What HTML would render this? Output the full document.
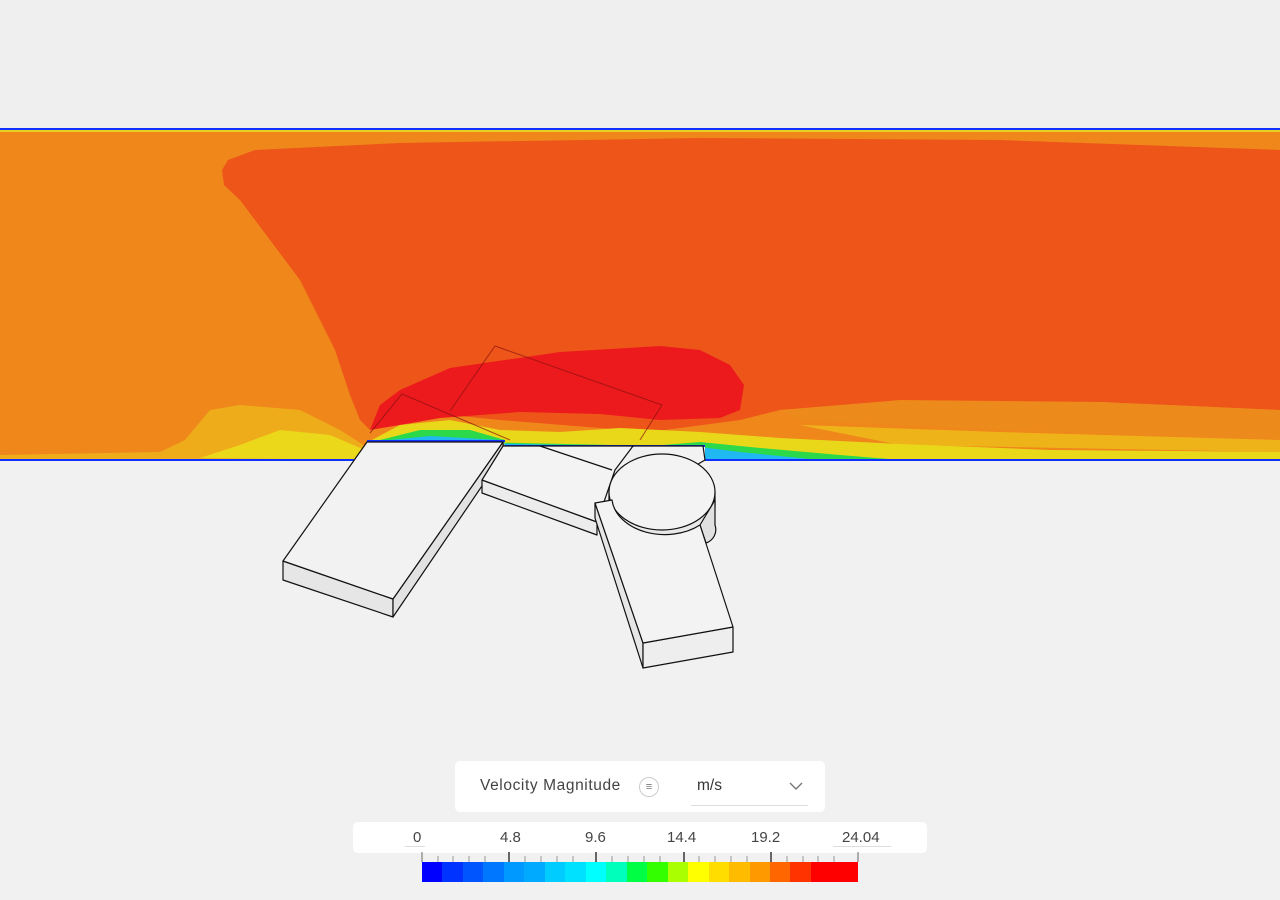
<!DOCTYPE html>
<html><head><style>
body{margin:0;width:1280px;height:900px;background:#f0f0f0;overflow:hidden;font-family:"Liberation Sans",sans-serif;position:relative}
svg{position:absolute;left:0;top:0}
.panel{position:absolute;background:#fff;border-radius:5px}
.bar{position:absolute;left:422px;top:862px;width:436px;height:20px;display:flex}
.bar div{flex:1}
</style></head><body>
<svg width="1280" height="900">
<rect x="0" y="0" width="1280" height="128" fill="#efefef"/>
<rect x="0" y="460" width="1280" height="440" fill="#f1f1f1"/>
<rect x="0" y="130" width="1280" height="330" fill="#ef871b"/>
<rect x="0" y="130" width="1280" height="2" fill="#e8d020"/>
<path d="M222,170 L228,160 L255,150 L400,143 L700,138 L1000,140 L1280,150 L1280,410 L1100,402 L900,400 L780,410 L740,420 L650,432 L500,420 L400,410 L370,430 L360,420 L350,395 L335,350 L300,280 L240,200 L224,185Z" fill="#ee5519"/>
<path d="M370,430 L380,405 L400,390 L450,368 L560,352 L660,346 L700,350 L730,365 L744,385 L740,410 L720,418 L660,420 L600,414 L520,412 L440,418 L400,425Z" fill="#ec1a1c"/>
<path d="M0,455 L160,452 L185,440 L210,410 L240,405 L300,410 L340,430 L368,448 L380,460 L0,460Z" fill="#eeac1a"/>
<path d="M200,458 L240,445 L280,430 L330,435 L365,450 L370,460Z" fill="#ecd81a"/>
<path d="M780,410 L900,401 L1100,402 L1280,410 L1280,440 L1000,430 L800,420Z" fill="#ed8a1c"/>
<path d="M800,425 L1000,432 L1280,440 L1280,452 L900,445Z" fill="#efb31a"/>
<path d="M368,442 L400,425 L450,420 L500,430 L560,432 L620,428 L700,432 L780,438 L900,444 L1050,450 L1280,452 L1280,460 L705,460 L703,446 L505,446 L503,442Z" fill="#e9d81a"/>
<path d="M380,440 L420,430 L470,430 L505,440 L505,446 L650,446 L700,442 L760,448 L840,455 L900,460 L705,460 L703,447Z" fill="#2cd94a"/>
<path d="M380,441 L430,436 L500,440 L506,447 L700,447 L740,452 L800,458 L820,460 L705,460 L703,448Z" fill="#1fb8f0"/>
<rect x="0" y="128" width="1280" height="2" fill="#1030ff"/>
<rect x="0" y="459" width="1280" height="2" fill="#1030ff"/>
<path d="M367,441 L503,441 L503,446 L705,446 L705,461 L367,461Z" fill="#f0f0f0"/>
<line x1="367" y1="441" x2="505" y2="441" stroke="#1030ff" stroke-width="2"/>
<line x1="505" y1="446" x2="705" y2="446" stroke="#1030ff" stroke-width="2"/>
<g fill="none" stroke="#8a1010" stroke-width="1" opacity="0.7">
<path d="M370,433 L402,394 L510,440"/>
<path d="M450,411 L495,346 L662,405 L640,440"/>
</g>
<g stroke="#111" stroke-width="1.2" stroke-linejoin="round">
<path d="M283,561 L393,599 L393,617 L283,580Z" fill="#e6e6e6"/>
<path d="M503,442 L393,599 L393,617 L503,455Z" fill="#e2e2e2"/>
<path d="M367,442 L503,442 L393,599 L283,561Z" fill="#f2f2f2"/>
<path d="M482,480 L597,522 L597,535 L482,493Z" fill="#ececec"/>
<path d="M482,480 L503,446 L633,446 L615,470 L597,522Z" fill="#f3f3f3"/>
<path d="M540,446 L612,470" fill="none"/>
<path d="M632,446 L703,446 L705,460 L688,470" fill="#f2f2f2"/>
<path d="M609,492 L609,505 A53,38 0 0 0 715,505 L715,492Z" fill="#e8e8e8"/>
<path d="M715,500 L715,525 A14,14 0 0 1 706,543 L700,525Z" fill="#e0e0e0"/>
<ellipse cx="662" cy="492" rx="53" ry="38" fill="#f3f3f3"/>
<path d="M595,503 L643,643 L643,668 L595,518Z" fill="#e6e6e6"/>
<path d="M643,643 L733,627 L733,652 L643,668Z" fill="#eeeeee"/>
<path d="M595,503 L612,500 A53,38 0 0 0 700,525 L733,627 L643,643Z" fill="#f3f3f3"/>
</g>
</svg>
<div class="panel" style="left:455px;top:761px;width:370px;height:51px">
<span style="position:absolute;left:25px;top:16px;font-size:15.5px;letter-spacing:0.6px;color:#444">Velocity Magnitude</span>
<span style="position:absolute;left:184px;top:16px;width:18px;height:18px;border:1.5px solid #ccc;border-radius:50%;font-size:11px;color:#777;text-align:center;line-height:18px">≡</span>
<span style="position:absolute;left:242px;top:16px;font-size:15.5px;color:#333">m/s</span>
<svg style="position:absolute;left:334px;top:21px" width="14" height="9"><path d="M1,1 L7,7 L13,1" fill="none" stroke="#777" stroke-width="1.4"/></svg>
<div style="position:absolute;left:236px;top:44px;width:117px;height:1px;background:#ddd"></div>
</div>
<div class="panel" style="left:353px;top:822px;width:574px;height:31px;font-size:15px;color:#444">
<span style="position:absolute;left:60px;top:7px">0</span>
<span style="position:absolute;left:147px;top:7px">4.8</span>
<span style="position:absolute;left:232px;top:7px">9.6</span>
<span style="position:absolute;left:314px;top:7px">14.4</span>
<span style="position:absolute;left:398px;top:7px">19.2</span>
<span style="position:absolute;left:489px;top:7px">24.04</span>
<div style="position:absolute;left:52px;top:24px;width:20px;height:1px;background:#ddd"></div>
<div style="position:absolute;left:480px;top:24px;width:58px;height:1px;background:#ddd"></div>
</div>
<svg width="1280" height="900" style="pointer-events:none">
<g stroke="#999" stroke-width="1">
<line x1="422" y1="852" x2="422" y2="862" stroke="#666"/>
<line x1="858" y1="852" x2="858" y2="862" stroke="#666"/>
<line x1="438" y1="856" x2="438" y2="862"/><line x1="453" y1="856" x2="453" y2="862"/><line x1="469" y1="856" x2="469" y2="862"/><line x1="485" y1="856" x2="485" y2="862"/>
<line x1="509" y1="852" x2="509" y2="862" stroke="#666" stroke-width="2"/>
<line x1="525" y1="856" x2="525" y2="862"/><line x1="541" y1="856" x2="541" y2="862"/><line x1="557" y1="856" x2="557" y2="862"/><line x1="573" y1="856" x2="573" y2="862"/>
<line x1="596" y1="852" x2="596" y2="862" stroke="#666" stroke-width="2"/>
<line x1="612" y1="856" x2="612" y2="862"/><line x1="628" y1="856" x2="628" y2="862"/><line x1="644" y1="856" x2="644" y2="862"/><line x1="660" y1="856" x2="660" y2="862"/>
<line x1="684" y1="852" x2="684" y2="862" stroke="#666" stroke-width="2"/>
<line x1="699" y1="856" x2="699" y2="862"/><line x1="715" y1="856" x2="715" y2="862"/><line x1="731" y1="856" x2="731" y2="862"/><line x1="747" y1="856" x2="747" y2="862"/>
<line x1="771" y1="852" x2="771" y2="862" stroke="#666" stroke-width="2"/>
<line x1="787" y1="856" x2="787" y2="862"/><line x1="803" y1="856" x2="803" y2="862"/><line x1="818" y1="856" x2="818" y2="862"/><line x1="834" y1="856" x2="834" y2="862"/>
</g></svg>
<div class="bar">
<div style="background:#0000ff"></div><div style="background:#0033ff"></div><div style="background:#0055ff"></div><div style="background:#0077ff"></div><div style="background:#0099ff"></div><div style="background:#00aaff"></div><div style="background:#00ccff"></div><div style="background:#00e0ff"></div><div style="background:#00ffff"></div><div style="background:#00ffbb"></div><div style="background:#00ff44"></div><div style="background:#33ff00"></div><div style="background:#aaff00"></div><div style="background:#ffff00"></div><div style="background:#ffdd00"></div><div style="background:#ffbb00"></div><div style="background:#ff9900"></div><div style="background:#ff6600"></div><div style="background:#ff3300"></div><div style="background:#ff0000;flex:2.3"></div>
</div>
</body></html>
